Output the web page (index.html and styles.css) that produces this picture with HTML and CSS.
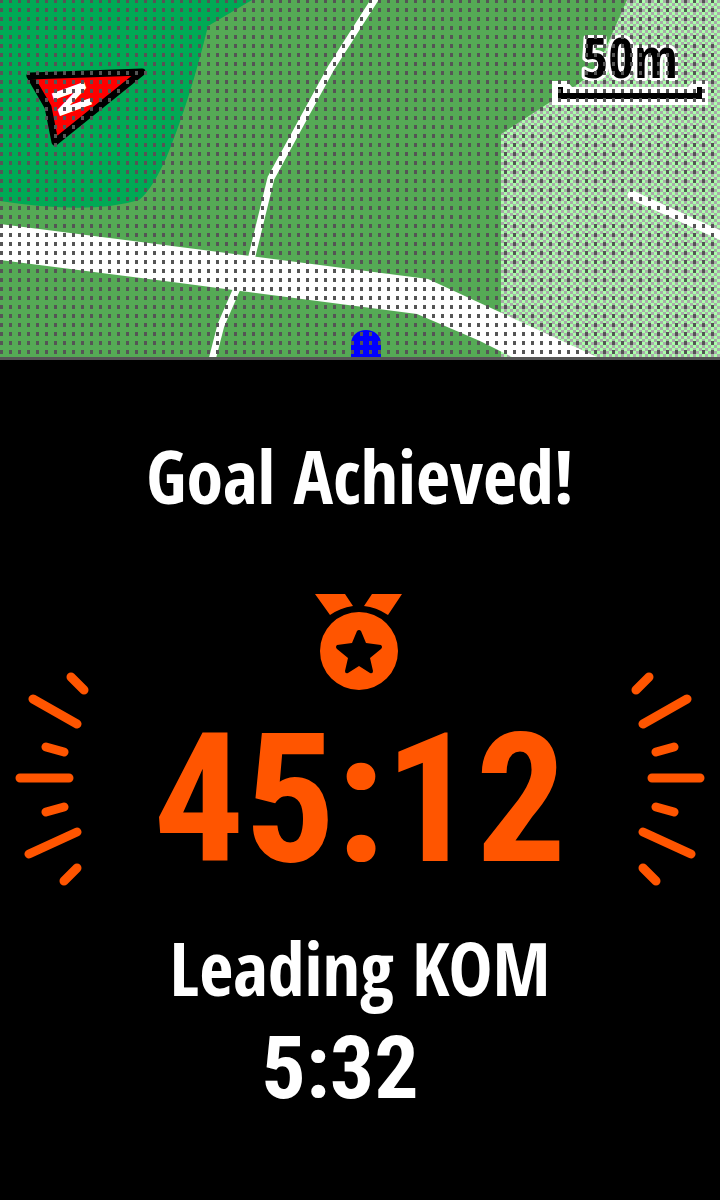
FILE: index.html
```
<!DOCTYPE html>
<html lang="en">
<head>
    <meta charset="UTF-8">
    <meta name="viewport" content="width=device-width, initial-scale=1.0">
    <title>Goal Achieved</title>
    <link rel="stylesheet" href="styles.css">
</head>
<body>
    <div class="map">
        <svg class="map-svg" viewBox="0 0 720 357">
            <defs>
                <pattern id="checker" x="0" y="0" width="6" height="6" patternUnits="userSpaceOnUse">
                    <rect width="6" height="6" fill="#aaffaa"/>
                    <rect x="3" y="0" width="3" height="3" fill="#aaaaaa"/>
                    <rect x="0" y="3" width="3" height="3" fill="#aaaaaa"/>
                </pattern>
                <pattern id="dots" x="0" y="-1" width="9" height="9" patternUnits="userSpaceOnUse">
                    <rect width="3" height="4" fill="#555555"/>
                </pattern>
            </defs>

            <!-- land -->
            <rect width="720" height="357" fill="#55aa55"/>
            <path d="M0 0H252L208 26Q190 100 167 156Q152 190 139 200Q90 215 0 201Z" fill="#00aa55"/>
            <path d="M627 0L604 52Q596 72 578 84L501 134V357H720V0Z" fill="url(#checker)"/>

            <!-- roads -->
            <path d="M377 -4L331 68L271 178L251 260M238 286L221 325L212 360" fill="none" stroke="#fff" stroke-width="7"/>
            <path d="M632 195L724 237" fill="none" stroke="#fff" stroke-width="9" stroke-linecap="round"/>
            <path d="M0 224L180 247L428 279L480 303L597 357H512L480 341L417 314L180 283L0 260Z" fill="#fff"/>

            <!-- current position -->
            <path d="M351 357V344C351 335 358 330 366 330S381 335 381 344V357Z" fill="#0000ff"/>

            <!-- north arrow -->
            <path d="M30 76L142 72L55 142L48 107Z" fill="#ff0000" stroke="#000" stroke-width="7" stroke-linejoin="round"/>
            <text class="north" transform="translate(72 99) rotate(70)" x="0" y="17" text-anchor="middle">N</text>

            <!-- scale -->
            <path d="M552 81H567L572 87H688L693 81H708V105H552Z" fill="#fff"/>
            <path d="M558 87H563V93H697V87H702V99H558Z" fill="#000"/>
            <text class="scale" x="630" y="78" text-anchor="middle">50m</text>

            <rect width="720" height="357" fill="url(#dots)"/>
        </svg>
    </div>

    <main class="goal">
        <h1 class="title">Goal Achieved!</h1>

        <div class="result">
            <svg class="rays" width="74" height="218" viewBox="15 672 74 218">
                <path d="M71 677L84 690M33 699L77 724M46 747L64 752M20 778H69M46 812L64 807M29 854L77 832M64 881L77 868"/>
            </svg>
            <div class="center">
                <svg class="medal" width="90" height="96" viewBox="315 594 90 96">
                    <path d="M315 594H345L353 606Q340 608 330 615ZM372 594H402L388 615Q376 607 364 606Z"/>
                    <path fill-rule="evenodd" d="M359 612A39 39 0 1 1 359 690A39 39 0 1 1 359 612ZM357 631L352 643L337 645Q335 647 337 649L348 658L345 671Q345 674 348 673L359 666L370 673Q373 674 373 671L370 658L381 649Q383 647 381 645L366 643L361 631Q359 629 357 631Z"/>
                </svg>
                <div class="time">45:12</div>
            </div>
            <svg class="rays" width="74" height="218" viewBox="631 672 74 218">
                <path d="M649 677L636 690M687 699L643 724M674 747L656 752M700 778H652M674 812L656 807M691 854L643 832M656 881L643 868"/>
            </svg>
        </div>

        <div class="label">Leading KOM</div>
        <div class="lead">5:32</div>
    </main>
</body>
</html>
```
FILE: styles.css
```
body {
    margin: 0;
    min-height: 100vh;
    background-color: #000;
    color: #fff;
    font-family: "Noto Sans SemiCondensed SemiBold", "Open Sans SemiCondensed SemiBold", "Open Sans Condensed", "Open Sans", sans-serif;
}
.map {
    border-bottom: 3px solid #555;
}
.map-svg {
    display: block;
    width: 100%;
}
.map-svg pattern {
    shape-rendering: crispEdges;
}
.north {
    font-family: "Roboto Condensed", Roboto, sans-serif;
    font-size: 48px;
    font-weight: 700;
    fill: #fff;
}
.scale {
    font-size: 56px;
    font-weight: 600;
    fill: #000;
    stroke: #fff;
    stroke-width: 6px;
    stroke-linejoin: round;
    paint-order: stroke;
}
.goal {
    display: flex;
    flex-direction: column;
    padding-top: 76px;
    text-align: center;
}
.title, .label {
    margin: 0;
    font-size: 74px;
    font-weight: 600;
    line-height: 80px;
}
.result {
    display: flex;
    justify-content: space-between;
    align-items: flex-end;
    margin: 78px 15px 38px;
}
.rays {
    fill: none;
    stroke: #ff5500;
    stroke-width: 9px;
    stroke-linecap: round;
}
.center {
    display: flex;
    flex-direction: column;
    align-items: center;
    gap: 20px;
}
.medal {
    fill: #ff5500;
}
.time, .lead {
    font-family: "Roboto Condensed", Roboto, sans-serif;
    font-weight: 700;
}
.time {
    color: #ff5500;
    font-size: 180px;
    line-height: 180px;
}
.lead {
    margin-top: 16px;
    padding-right: 40px;
    font-size: 88px;
    line-height: 88px;
}
```
